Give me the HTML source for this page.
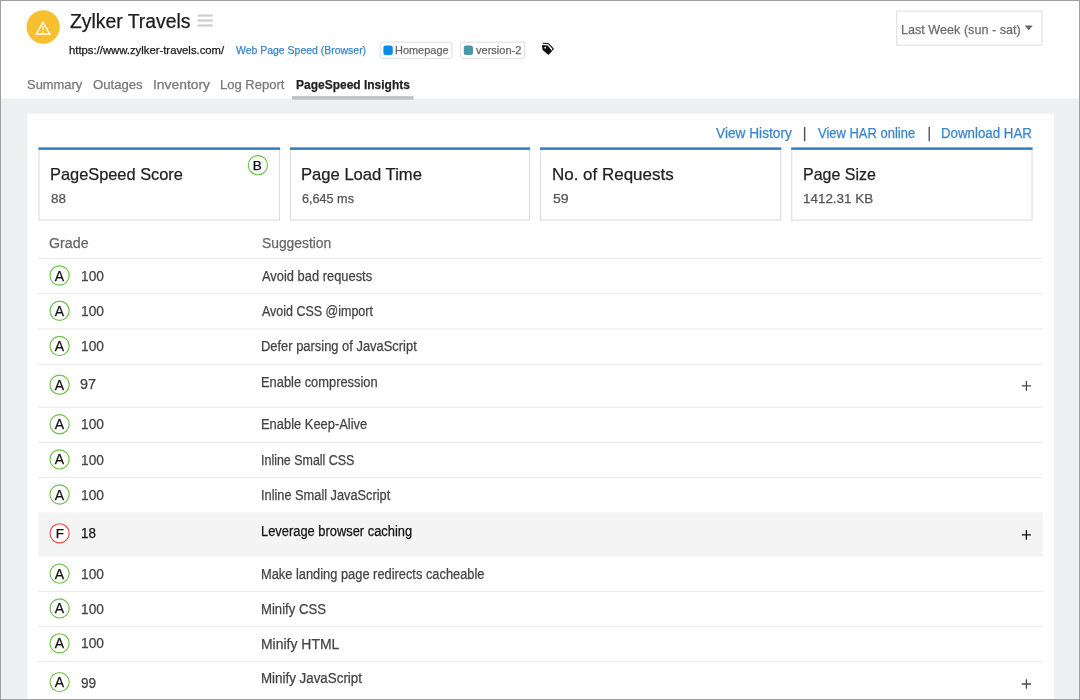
<!DOCTYPE html><html lang="en"><head><meta charset="utf-8"><title>Zylker Travels - PageSpeed Insights</title><style>
*{margin:0;padding:0;box-sizing:border-box}
html,body{width:1080px;height:700px;overflow:hidden;background:#fff}
body{position:relative;font-family:"Liberation Sans", sans-serif}
.a{position:absolute}
#geo{position:absolute;left:0;top:0;display:block}
#txt{position:absolute;left:0;top:0;width:1080px;height:700px;will-change:transform}
a{text-decoration:none}
.t{position:absolute;white-space:nowrap;line-height:1;transform-origin:0 0;display:block;-webkit-text-stroke:0.25px currentColor}
</style></head><body>
<svg id="geo" width="1080" height="700" viewBox="0 0 1080 700">
<rect x="0.00" y="98.70" width="1080.00" height="601.30" fill="#eeeff0"/>
<rect x="27.50" y="113.80" width="1026.50" height="586.20" fill="#fff"/>
<rect x="292.00" y="96.10" width="121.60" height="3.60" fill="#c2c2c2"/>
<circle cx="43.15" cy="27" r="16.65" fill="#f6c02e"/>
<path d="M43 22.5 L49.8 34.0 L36.2 34.0 Z" fill="none" stroke="#fff" stroke-width="1.4"/>
<path d="M43 26.0 V30.3 M43 31.2 V32.4" stroke="#fff" stroke-width="1.1" fill="none"/>
<rect x="197.70" y="14.45" width="15.10" height="2.20" fill="#cdcdcd"/>
<rect x="197.70" y="19.40" width="15.10" height="2.20" fill="#cdcdcd"/>
<rect x="197.70" y="24.40" width="15.10" height="2.20" fill="#cdcdcd"/>
<rect x="380.1" y="42.1" width="71.8" height="16.3" rx="2.2" fill="#fff" stroke="#dedede" stroke-width="1"/>
<rect x="383.4" y="45.6" width="9.4" height="9.4" rx="2.1" fill="#068ee9"/>
<rect x="460.7" y="42.1" width="64.0" height="16.3" rx="2.2" fill="#fff" stroke="#dedede" stroke-width="1"/>
<rect x="463.8" y="45.6" width="9.2" height="9.4" rx="2.1" fill="#4896aa"/>
<path d="M542.0 45.0 L547.7 45.4 L552.2 51.0 L548.4 54.9 L542.4 49.8 Z M544.4 47.7 a0.85 0.85 0 1 0 1.7 0 a0.85 0.85 0 1 0 -1.7 0 Z" fill="#111" fill-rule="evenodd"/>
<path d="M543.1 43.2 L548.5 43.7 L553.2 48.8 L552.5 49.8" fill="none" stroke="#111" stroke-width="1.15" stroke-linejoin="round" stroke-linecap="round"/>
<rect x="896.7" y="11.1" width="145.3" height="34.0" fill="#fff" stroke="#dedede" stroke-width="1"/>
<path d="M1024.8 25.6 H1032.7 L1028.75 30.2 Z" fill="#666"/>
<rect x="39.05" y="148.5" width="240.50" height="71.6" fill="#fff" stroke="#dcdcdc" stroke-width="1.1"/>
<rect x="38.50" y="147.35" width="241.60" height="2.55" fill="#327fc6"/>
<rect x="290.45" y="148.5" width="239.10" height="71.6" fill="#fff" stroke="#dcdcdc" stroke-width="1.1"/>
<rect x="289.90" y="147.35" width="240.20" height="2.55" fill="#327fc6"/>
<rect x="540.55" y="148.5" width="240.20" height="71.6" fill="#fff" stroke="#dcdcdc" stroke-width="1.1"/>
<rect x="540.00" y="147.35" width="241.30" height="2.55" fill="#327fc6"/>
<rect x="791.75" y="148.5" width="240.30" height="71.6" fill="#fff" stroke="#dcdcdc" stroke-width="1.1"/>
<rect x="791.20" y="147.35" width="241.40" height="2.55" fill="#327fc6"/>
<circle cx="257.9" cy="165.2" r="9.6" fill="#fff" stroke="#6cc24a" stroke-width="1.15"/>
<rect x="38.20" y="258.00" width="1004.60" height="1.00" fill="#e9e9e9"/>
<rect x="38.20" y="293.30" width="1004.60" height="1.00" fill="#e9e9e9"/>
<rect x="38.20" y="328.50" width="1004.60" height="1.00" fill="#e9e9e9"/>
<rect x="38.20" y="363.80" width="1004.60" height="1.00" fill="#e9e9e9"/>
<rect x="38.20" y="406.70" width="1004.60" height="1.00" fill="#e9e9e9"/>
<rect x="38.20" y="441.90" width="1004.60" height="1.00" fill="#e9e9e9"/>
<rect x="38.20" y="477.00" width="1004.60" height="1.00" fill="#e9e9e9"/>
<rect x="38.20" y="512.20" width="1004.50" height="44.30" fill="#f4f4f4"/>
<rect x="38.20" y="590.90" width="1004.60" height="1.00" fill="#e9e9e9"/>
<rect x="38.20" y="625.80" width="1004.60" height="1.00" fill="#e9e9e9"/>
<rect x="38.20" y="661.30" width="1004.60" height="1.00" fill="#e9e9e9"/>
<circle cx="59.60" cy="275.50" r="9.6" fill="#fff" stroke="#6cc24a" stroke-width="1.15"/>
<circle cx="59.60" cy="310.80" r="9.6" fill="#fff" stroke="#6cc24a" stroke-width="1.15"/>
<circle cx="59.60" cy="346.00" r="9.6" fill="#fff" stroke="#6cc24a" stroke-width="1.15"/>
<circle cx="59.60" cy="384.70" r="9.6" fill="#fff" stroke="#6cc24a" stroke-width="1.15"/>
<circle cx="59.60" cy="424.20" r="9.6" fill="#fff" stroke="#6cc24a" stroke-width="1.15"/>
<circle cx="59.60" cy="459.40" r="9.6" fill="#fff" stroke="#6cc24a" stroke-width="1.15"/>
<circle cx="59.60" cy="494.50" r="9.6" fill="#fff" stroke="#6cc24a" stroke-width="1.15"/>
<circle cx="59.60" cy="533.30" r="9.6" fill="#fff" stroke="#f0474a" stroke-width="1.15"/>
<circle cx="59.60" cy="573.60" r="9.6" fill="#fff" stroke="#6cc24a" stroke-width="1.15"/>
<circle cx="59.60" cy="608.40" r="9.6" fill="#fff" stroke="#6cc24a" stroke-width="1.15"/>
<circle cx="59.60" cy="643.30" r="9.6" fill="#fff" stroke="#6cc24a" stroke-width="1.15"/>
<circle cx="59.60" cy="682.10" r="9.6" fill="#fff" stroke="#6cc24a" stroke-width="1.15"/>
<path d="M1021.80 385.90 H1031.00 M1026.40 381.10 V390.70" stroke="#4a4a4a" stroke-width="1.3" fill="none"/>
<path d="M1021.80 534.90 H1031.00 M1026.40 530.10 V539.70" stroke="#111" stroke-width="1.3" fill="none"/>
<path d="M1021.80 684.00 H1031.00 M1026.40 679.20 V688.80" stroke="#4a4a4a" stroke-width="1.3" fill="none"/>
<rect x="0.5" y="0.5" width="1079" height="699" fill="none" stroke="#a0a0a0" stroke-width="1"/>
</svg>
<div id="txt">
<header><h1 class="t" id="t0" style="left:69.68px;top:11.05px;font-size:20px;font-weight:400;color:#1c1c1c;transform:scaleX(0.9675)">Zylker Travels</h1><span class="t" id="t1" style="left:68.71px;top:45.05px;font-size:11px;font-weight:400;color:#1a1a1a;transform:scaleX(1.0278)">https://www.zylker-travels.com/</span><a class="t" id="t2" style="left:235.55px;top:45.02px;font-size:11px;font-weight:400;color:#3a85c8;transform:scaleX(0.9514)">Web Page Speed (Browser)</a><span class="t" id="t3" style="left:394.60px;top:45.12px;font-size:11px;font-weight:400;color:#666;transform:scaleX(0.9954)">Homepage</span><span class="t" id="t4" style="left:475.72px;top:45.12px;font-size:11px;font-weight:400;color:#666;transform:scaleX(1.0037)">version-2</span><span class="t" id="t5" style="left:900.53px;top:23.11px;font-size:13.3px;font-weight:400;color:#6c6c6c;transform:scaleX(0.9493)">Last Week (sun - sat)</span></header>
<nav><a class="t" id="t6" style="left:26.57px;top:78.07px;font-size:13.5px;font-weight:400;color:#777;transform:scaleX(0.9581)">Summary</a><a class="t" id="t7" style="left:92.60px;top:78.07px;font-size:13.5px;font-weight:400;color:#777;transform:scaleX(0.9726)">Outages</a><a class="t" id="t8" style="left:152.61px;top:78.07px;font-size:13.5px;font-weight:400;color:#777;transform:scaleX(1.0271)">Inventory</a><a class="t" id="t9" style="left:219.62px;top:78.07px;font-size:13.5px;font-weight:400;color:#777;transform:scaleX(0.9654)">Log Report</a><a class="t" id="t10" style="left:295.50px;top:78.07px;font-size:13.5px;font-weight:700;color:#222;transform:scaleX(0.8878)">PageSpeed Insights</a></nav>
<div class="actions"><a class="t" id="t11" style="left:715.61px;top:126.00px;font-size:14px;font-weight:400;color:#3a85c8;transform:scaleX(0.9777)">View History</a><span class="t" id="t61" style="left:802.82px;top:126.00px;font-size:14px;font-weight:400;color:#555;transform:scaleX(1.0000)">|</span><a class="t" id="t12" style="left:817.62px;top:126.00px;font-size:14px;font-weight:400;color:#3a85c8;transform:scaleX(0.9270)">View HAR online</a><span class="t" id="t62" style="left:927.54px;top:126.00px;font-size:14px;font-weight:400;color:#555;transform:scaleX(1.0000)">|</span><a class="t" id="t13" style="left:940.50px;top:126.00px;font-size:14px;font-weight:400;color:#3a85c8;transform:scaleX(0.9495)">Download HAR</a></div>
<section class="cards">
<div class="card"><h2 class="t" id="t14" style="left:49.51px;top:166.06px;font-size:17px;font-weight:400;color:#222;transform:scaleX(0.9631)">PageSpeed Score</h2><span class="t" id="t18" style="left:50.60px;top:193.10px;font-size:12.5px;font-weight:400;color:#555;transform:scaleX(1.0752)">88</span><b class="t" id="t60" style="left:252.69px;top:159.02px;font-size:13.5px;font-weight:400;color:#111;transform:scaleX(1.0000)">B</b></div>
<div class="card"><h2 class="t" id="t15" style="left:300.73px;top:166.06px;font-size:17px;font-weight:400;color:#222;transform:scaleX(0.9764)">Page Load Time</h2><span class="t" id="t19" style="left:301.67px;top:193.10px;font-size:12.5px;font-weight:400;color:#555;transform:scaleX(1.0102)">6,645 ms</span></div>
<div class="card"><h2 class="t" id="t16" style="left:551.66px;top:166.06px;font-size:17px;font-weight:400;color:#222;transform:scaleX(0.9980)">No. of Requests</h2><span class="t" id="t20" style="left:552.51px;top:193.10px;font-size:12.5px;font-weight:400;color:#555;transform:scaleX(1.1292)">59</span></div>
<div class="card"><h2 class="t" id="t17" style="left:802.51px;top:166.06px;font-size:17px;font-weight:400;color:#222;transform:scaleX(0.9395)">Page Size</h2><span class="t" id="t21" style="left:802.53px;top:193.10px;font-size:12.5px;font-weight:400;color:#555;transform:scaleX(1.0740)">1412.31 KB</span></div>
</section>
<section class="grades">
<div class="thead"><span class="t" id="t22" style="left:48.56px;top:236.10px;font-size:14px;font-weight:400;color:#666;transform:scaleX(1.0167)">Grade</span><span class="t" id="t23" style="left:261.52px;top:236.10px;font-size:14px;font-weight:400;color:#666;transform:scaleX(0.9881)">Suggestion</span></div>
<div class="row"><b class="t" id="t48" style="left:54.67px;top:269.06px;font-size:14px;font-weight:400;color:#111;transform:scaleX(1.0000)">A</b><span class="t" id="t25" style="left:80.71px;top:270.07px;font-size:13.8px;font-weight:400;color:#444;transform:scaleX(0.9943)">100</span><span class="t" id="t24" style="left:261.56px;top:269.00px;font-size:14px;font-weight:400;color:#444;transform:scaleX(0.9209)">Avoid bad requests</span></div>
<div class="row"><b class="t" id="t49" style="left:54.67px;top:304.11px;font-size:14px;font-weight:400;color:#111;transform:scaleX(1.0000)">A</b><span class="t" id="t27" style="left:80.71px;top:305.12px;font-size:13.8px;font-weight:400;color:#444;transform:scaleX(0.9943)">100</span><span class="t" id="t26" style="left:261.58px;top:304.06px;font-size:14px;font-weight:400;color:#444;transform:scaleX(0.8911)">Avoid CSS @import</span></div>
<div class="row"><b class="t" id="t50" style="left:54.67px;top:339.06px;font-size:14px;font-weight:400;color:#111;transform:scaleX(1.0000)">A</b><span class="t" id="t29" style="left:80.71px;top:340.07px;font-size:13.8px;font-weight:400;color:#444;transform:scaleX(0.9943)">100</span><span class="t" id="t28" style="left:260.69px;top:339.00px;font-size:14px;font-weight:400;color:#444;transform:scaleX(0.9223)">Defer parsing of JavaScript</span></div>
<div class="row"><b class="t" id="t51" style="left:54.67px;top:378.00px;font-size:14px;font-weight:400;color:#111;transform:scaleX(1.0000)">A</b><span class="t" id="t31" style="left:79.61px;top:378.02px;font-size:13.8px;font-weight:400;color:#444;transform:scaleX(1.0442)">97</span><span class="t" id="t30" style="left:260.69px;top:375.00px;font-size:14px;font-weight:400;color:#444;transform:scaleX(0.9195)">Enable compression</span></div>
<div class="row"><b class="t" id="t52" style="left:54.67px;top:417.00px;font-size:14px;font-weight:400;color:#111;transform:scaleX(1.0000)">A</b><span class="t" id="t33" style="left:80.71px;top:418.02px;font-size:13.8px;font-weight:400;color:#444;transform:scaleX(0.9943)">100</span><span class="t" id="t32" style="left:260.69px;top:417.08px;font-size:14px;font-weight:400;color:#444;transform:scaleX(0.9221)">Enable Keep-Alive</span></div>
<div class="row"><b class="t" id="t53" style="left:54.67px;top:452.08px;font-size:14px;font-weight:400;color:#111;transform:scaleX(1.0000)">A</b><span class="t" id="t35" style="left:80.71px;top:454.10px;font-size:13.8px;font-weight:400;color:#444;transform:scaleX(0.9943)">100</span><span class="t" id="t34" style="left:260.70px;top:453.03px;font-size:14px;font-weight:400;color:#444;transform:scaleX(0.8893)">Inline Small CSS</span></div>
<div class="row"><b class="t" id="t54" style="left:54.67px;top:488.06px;font-size:14px;font-weight:400;color:#111;transform:scaleX(1.0000)">A</b><span class="t" id="t37" style="left:80.71px;top:489.07px;font-size:13.8px;font-weight:400;color:#444;transform:scaleX(0.9943)">100</span><span class="t" id="t36" style="left:260.66px;top:488.00px;font-size:14px;font-weight:400;color:#444;transform:scaleX(0.9128)">Inline Small JavaScript</span></div>
<div class="row"><b class="t" id="t55" style="left:55.76px;top:527.02px;font-size:13.5px;font-weight:400;color:#111;transform:scaleX(1.0000)">F</b><span class="t" id="t39" style="left:80.66px;top:527.05px;font-size:13.8px;font-weight:400;color:#111;transform:scaleX(0.9677)">18</span><span class="t" id="t38" style="left:260.69px;top:524.05px;font-size:14px;font-weight:400;color:#111;transform:scaleX(0.9206)">Leverage browser caching</span></div>
<div class="row"><b class="t" id="t56" style="left:54.67px;top:567.03px;font-size:14px;font-weight:400;color:#111;transform:scaleX(1.0000)">A</b><span class="t" id="t41" style="left:80.71px;top:568.05px;font-size:13.8px;font-weight:400;color:#444;transform:scaleX(0.9943)">100</span><span class="t" id="t40" style="left:260.69px;top:567.11px;font-size:14px;font-weight:400;color:#444;transform:scaleX(0.9174)">Make landing page redirects cacheable</span></div>
<div class="row"><b class="t" id="t57" style="left:54.67px;top:601.08px;font-size:14px;font-weight:400;color:#111;transform:scaleX(1.0000)">A</b><span class="t" id="t43" style="left:80.71px;top:603.10px;font-size:13.8px;font-weight:400;color:#444;transform:scaleX(0.9943)">100</span><span class="t" id="t42" style="left:260.68px;top:602.03px;font-size:14px;font-weight:400;color:#444;transform:scaleX(0.9377)">Minify CSS</span></div>
<div class="row"><b class="t" id="t58" style="left:54.67px;top:636.10px;font-size:14px;font-weight:400;color:#111;transform:scaleX(1.0000)">A</b><span class="t" id="t45" style="left:80.71px;top:637.12px;font-size:13.8px;font-weight:400;color:#444;transform:scaleX(0.9943)">100</span><span class="t" id="t44" style="left:260.60px;top:637.05px;font-size:14px;font-weight:400;color:#444;transform:scaleX(0.9965)">Minify HTML</span></div>
<div class="row"><b class="t" id="t59" style="left:54.67px;top:675.03px;font-size:14px;font-weight:400;color:#111;transform:scaleX(1.0000)">A</b><span class="t" id="t47" style="left:80.71px;top:677.10px;font-size:13.8px;font-weight:400;color:#444;transform:scaleX(0.9915)">99</span><span class="t" id="t46" style="left:260.65px;top:671.11px;font-size:14px;font-weight:400;color:#444;transform:scaleX(0.9539)">Minify JavaScript</span></div>
</section>
</div>
</body></html>
